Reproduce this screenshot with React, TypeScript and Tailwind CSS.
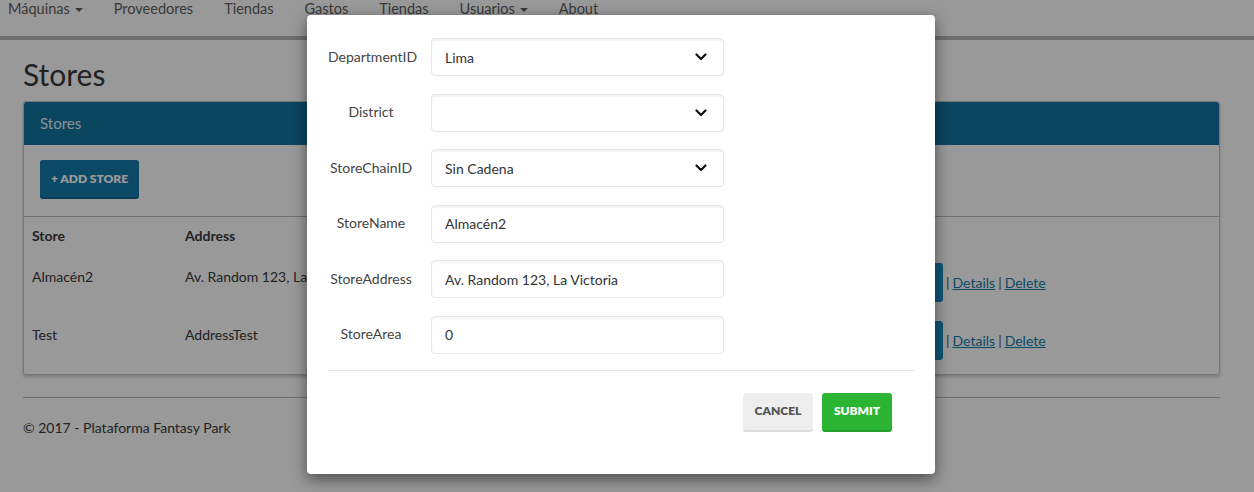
import { useState } from 'react'

const NAV = [
  { label: 'Máquinas', caret: true },
  { label: 'Proveedores' },
  { label: 'Tiendas' },
  { label: 'Gastos' },
  { label: 'Tiendas' },
  { label: 'Usuarios', caret: true },
  { label: 'About' }
]

const STORES = [
  { name: 'Almacén2', address: 'Av. Random 123, La Victoria' },
  { name: 'Test', address: 'AddressTest' }
]

const Chevron = () => (
  <svg width="12" height="8" viewBox="0 0 12 8" className="shrink-0">
    <polyline points="1.5,1.5 6,6 10.5,1.5" fill="none" stroke="#111" strokeWidth="2.2" strokeLinecap="round" strokeLinejoin="round" />
  </svg>
)

const fieldClass =
  'flex h-[38px] w-[293px] items-center justify-between rounded-[4px] border border-[#e6e6e6] bg-white pl-[13px] pr-[16px] text-[14px] text-[#333] shadow-[inset_0_2px_1px_rgba(0,0,0,0.04)]'

const SelectField = ({ value }: { value: string }) => (
  <div className={fieldClass}>
    <span>{value}</span>
    <Chevron />
  </div>
)

const TextField = ({ value }: { value: string }) => (
  <div className={fieldClass}>
    <span>{value}</span>
  </div>
)

const FormRow = ({ label, children }: { label: string; children: React.ReactNode }) => (
  <div className="flex items-center gap-[17px]">
    <label className="-mt-[2px] w-[86px] text-center text-[14px] text-[#444]">{label}</label>
    {children}
  </div>
)

const StoreModal = () => {
  const [open] = useState(true)
  if (!open) return null
  return (
    <div className="absolute inset-0 bg-black/40">
      <div className="absolute left-[307px] top-[15px] flex h-[459px] w-[628px] flex-col rounded-[4px] bg-white px-[21px] pt-[23px] shadow-[0_5px_15px_rgba(0,0,0,0.5)]">
        <div className="flex flex-col gap-[17.6px]">
          <FormRow label="DepartmentID">
            <SelectField value="Lima" />
          </FormRow>
          <FormRow label="District">
            <SelectField value="" />
          </FormRow>
          <FormRow label="StoreChainID">
            <SelectField value="Sin Cadena" />
          </FormRow>
          <FormRow label="StoreName">
            <TextField value="Almacén2" />
          </FormRow>
          <FormRow label="StoreAddress">
            <TextField value="Av. Random 123, La Victoria" />
          </FormRow>
          <FormRow label="StoreArea">
            <TextField value="0" />
          </FormRow>
        </div>
        <div className="mt-[16px] border-t border-[#e5e5e5]" />
        <div className="mt-[22px] flex justify-end gap-[9px] pr-[22px]">
          <button className="h-[39px] w-[70px] rounded-[3px] border-b-2 border-[#dcdcdc] bg-[#eeeeee] text-[12px] font-extrabold text-[#555]">
            CANCEL
          </button>
          <button className="h-[39px] w-[70px] rounded-[3px] border-b-2 border-[#22a02a] bg-[#2bb532] text-[12px] font-extrabold text-white">
            SUBMIT
          </button>
        </div>
      </div>
    </div>
  )
}

export default function App() {
  return (
    <div className="relative h-[492px] w-[1254px] overflow-hidden bg-white font-['Lato','Open_Sans',sans-serif] text-[#393939]">
      <nav className="flex h-[40px] items-start gap-[31px] border-b-4 border-[#b9b9b9] bg-white pl-[8px]">
        {NAV.map((item, i) => (
          <a key={i} className="flex items-center gap-[5px] text-[14.5px] leading-[18px] text-[#5f5f5f]">
            {item.label}
            {item.caret && <span className="mt-[2px] border-x-[4px] border-t-[4px] border-x-transparent border-t-[#5f5f5f]" />}
          </a>
        ))}
      </nav>

      <main className="ml-[23px] w-[1197px]">
        <h2 className="mt-[16px] mb-[9px] text-[30px] leading-[36px] text-[#393939]">Stores</h2>

        <section className="rounded-[3px] border border-[#c7c7c7] bg-white shadow-[0_2px_3px_rgba(0,0,0,0.2)]">
          <div className="flex h-[43px] items-center rounded-t-[3px] bg-[#1275a0] pl-[16px] text-[15px] text-white/90">Stores</div>
          <div className="border-b border-[#bbbbbb] px-[16px] pt-[15px] pb-[17px]">
            <button className="h-[39px] w-[99px] rounded-[3px] border-b-2 border-[#0f6690] bg-[#147baa] text-[12px] font-extrabold text-white">
              + ADD STORE
            </button>
          </div>
          <div className="text-[14px]">
            <div className="flex h-[41px] px-[8px] pt-[8px] font-bold">
              <div className="w-[153px]">Store</div>
              <div className="w-[675px]">Address</div>
              <div className="flex-1" />
            </div>
            {STORES.map((s) => (
              <div key={s.name} className="flex h-[58px] px-[8px]">
                <div className="w-[153px] pt-[8px]">{s.name}</div>
                <div className="w-[270px] overflow-hidden whitespace-nowrap pt-[8px]">{s.address}</div>
                <div className="w-[405px]" />
                <div className="flex flex-1 items-start pt-[5px]">
                  <div className="flex items-center gap-[3px]">
                    <button className="h-[39px] w-[83px] rounded-[3px] bg-[#1a90c4] text-[12px] font-bold text-white">EDIT</button>
                    <span className="text-[#555]">|</span>
                    <a className="text-[#127daa] underline">Details</a>
                    <span className="text-[#555]">|</span>
                    <a className="text-[#127daa] underline">Delete</a>
                  </div>
                </div>
              </div>
            ))}
          </div>
        </section>

        <hr className="mt-[22px] border-t border-[#bbbbbb]" />
        <footer className="pt-[20px] text-[14px] leading-[20px] text-[#393939]">© 2017 - Plataforma Fantasy Park</footer>
      </main>

      <StoreModal />
    </div>
  )
}
